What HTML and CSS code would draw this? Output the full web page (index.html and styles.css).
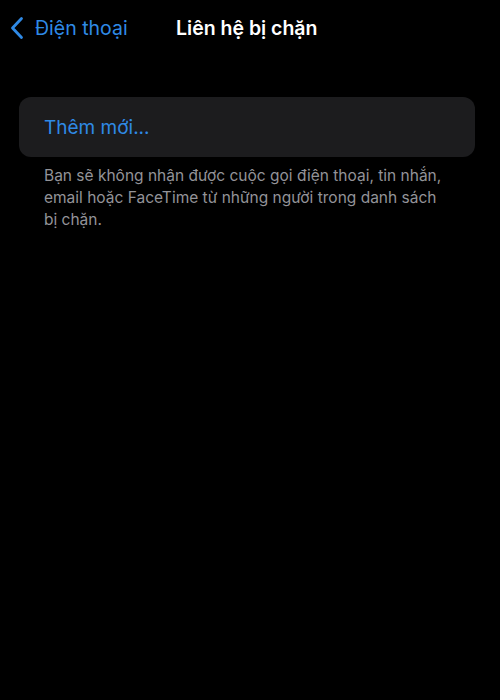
FILE: index.html
```html
<!DOCTYPE html>
<html lang="vi">
<head>
<meta charset="utf-8">
<link rel="stylesheet" href="styles.css">
</head>
<body>
<header class="nav">
  <a class="back">
    <svg class="chev" width="14" height="24" viewBox="0 0 14 24"><path d="M11.5 2.5 L2.5 12 L11.5 21.5" fill="none" stroke="#2f8ae6" stroke-width="2.8" stroke-linecap="round" stroke-linejoin="round"/></svg>
    <span class="back-label">Điện thoại</span>
  </a>
  <h1 class="title">Liên hệ bị chặn</h1>
</header>
<main class="content">
  <div class="card">
    <span class="add">Thêm mới...</span>
  </div>
  <p class="note">Bạn sẽ không nhận được cuộc gọi điện thoại, tin nhắn, email hoặc FaceTime từ những người trong danh sách bị chặn.</p>
</main>
</body>
</html>
```
FILE: styles.css
```css
html, body {
  margin: 0;
  padding: 0;
  background: #000;
  width: 500px;
  height: 700px;
  font-family: Inter, "Liberation Sans", sans-serif;
}
.nav {
  display: flex;
  align-items: center;
  height: 56px;
  padding: 0 0 0 10px;
}
.back {
  display: flex;
  align-items: center;
  gap: 11px;
  color: #2f8ae6;
  font-size: 19.5px;
  width: 166px;
}
.chev { display: block; }
.title {
  margin: 0;
  color: #fff;
  font-size: 19.5px;
  font-weight: 600;
}
.content {
  padding: 41px 25px 0 19px;
}
.card {
  background: #1c1c1e;
  border-radius: 12px;
  height: 60px;
  display: flex;
  align-items: center;
  padding-left: 25px;
}
.add {
  color: #2f8ae6;
  font-size: 19px;
}
.note {
  margin: 8px 0 0 25px;
  color: #939398;
  font-size: 15.5px;
  line-height: 22px;
  max-width: 405px;
}
```
